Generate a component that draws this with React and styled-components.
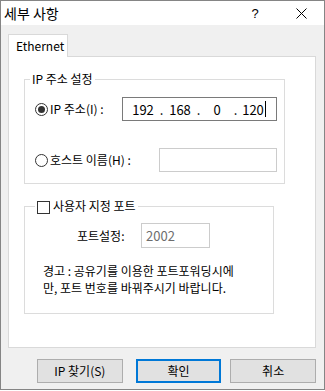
import styled, { createGlobalStyle } from "styled-components";

const GlobalStyle = createGlobalStyle`
  body {
    margin: 0;
    background: #ffffff;
    font-family: "Noto Sans CJK KR", "Noto Sans", sans-serif;
    font-size: 12px;
    color: #000;
  }
`;

export default () => {
  return (
    <>
      <GlobalStyle />
      <Window>
        <TitleBar>
          <Title>세부 사항</Title>
          <CaptionButton>?</CaptionButton>
          <CaptionButton>
            <svg width="11" height="11" viewBox="0 0 11 11">
              <path d="M0.5 0.5 L10.5 10.5 M10.5 0.5 L0.5 10.5" stroke="#000" strokeWidth="1" />
            </svg>
          </CaptionButton>
        </TitleBar>

        <Body>
          <TabStrip>
            <Tab>Ethernet</Tab>
          </TabStrip>
          <Panel>
            <Group $width={261}>
              <Legend $offset={5}>IP 주소 설정</Legend>
              <GroupInner $padding="10px 7px 11px 10px" $gap={27}>
                <OptionRow>
                  <Radio $checked />
                  <OptionLabel>IP 주소(I) :</OptionLabel>
                  <IpBox>
                    <IpField>192</IpField>
                    <IpDot>.</IpDot>
                    <IpField>168</IpField>
                    <IpDot>.</IpDot>
                    <IpField>0</IpField>
                    <IpDot>.</IpDot>
                    <IpField>
                      120<Caret />
                    </IpField>
                  </IpBox>
                </OptionRow>
                <OptionRow>
                  <Radio />
                  <OptionLabel>호스트 이름(H) :</OptionLabel>
                  <TextBox $width={118} />
                </OptionRow>
              </GroupInner>
            </Group>

            <Group $width={250} $top={14}>
              <Legend $offset={10}>
                <CheckLabel>
                  <Checkbox />
                  사용자 지정 포트
                </CheckLabel>
              </Legend>
              <GroupInner $padding="9px 7px 17px 0" $gap={14}>
                <PortRow>
                  <PortLabel>포트설정:</PortLabel>
                  <TextBox $width={69} $height={25}>2002</TextBox>
                </PortRow>
                <Warning>
                  경고 : 공유기를 이용한 포트포워딩시에
                  <br />
                  만, 포트 번호를 바꿔주시기 바랍니다.
                </Warning>
              </GroupInner>
            </Group>
          </Panel>

          <ButtonRow>
            <Button $space={13}>IP 찾기(S)</Button>
            <Button $space={9} $primary>
              확인
            </Button>
            <Button>취소</Button>
          </ButtonRow>
        </Body>
      </Window>
    </>
  );
};

const Window = styled.div`
  box-sizing: border-box;
  width: 325px;
  height: 390px;
  border: 1px solid #858585;
  background: #f0f0f0;
  display: flex;
  flex-direction: column;
`;

const TitleBar = styled.div`
  height: 24px;
  background: #ffffff;
  display: flex;
  align-items: center;
  padding-left: 3px;
`;

const Title = styled.div`
  flex: 1;
  font-size: 14px;
  line-height: 24px;
`;

const CaptionButton = styled.div`
  width: 46px;
  height: 24px;
  display: flex;
  align-items: center;
  justify-content: center;
  font-size: 13px;
  font-family: "Liberation Sans", sans-serif;
`;

const Body = styled.div`
  flex: 1;
  display: flex;
  flex-direction: column;
  padding: 9px 8px 6px 7px;
`;

const TabStrip = styled.div`
  display: flex;
  height: 22px;
`;

const Tab = styled.div`
  box-sizing: border-box;
  width: 60px;
  height: 23px;
  padding-left: 7px;
  border: 1px solid #d9d9d9;
  border-bottom: none;
  background: #ffffff;
  line-height: 21px;
  position: relative;
  z-index: 1;
`;

const Panel = styled.div`
  box-sizing: border-box;
  height: 292px;
  border: 1px solid #d9d9d9;
  background: #ffffff;
  padding: 14px 0 0 15px;
  display: flex;
  flex-direction: column;
  align-items: flex-start;
`;

const Group = styled.fieldset`
  box-sizing: border-box;
  width: ${(p) => p.$width}px;
  margin: ${(p) => p.$top || 0}px 0 0 0;
  padding: 0;
  min-width: 0;
  border: 1px solid #dcdcdc;
`;

const Legend = styled.legend`
  margin-left: ${(p) => p.$offset}px;
  padding: 0 2px;
  line-height: 16px;
  height: 16px;
`;

const GroupInner = styled.div`
  display: flex;
  flex-direction: column;
  gap: ${(p) => p.$gap}px;
  padding: ${(p) => p.$padding};
`;

const OptionRow = styled.div`
  display: flex;
  align-items: center;
  height: 24px;
`;

const Radio = styled.span`
  box-sizing: border-box;
  width: 13px;
  height: 13px;
  border-radius: 50%;
  border: 1px solid #333333;
  background: #ffffff;
  display: flex;
  align-items: center;
  justify-content: center;
  margin-right: 2px;

  &::after {
    content: "";
    width: 7px;
    height: 7px;
    border-radius: 50%;
    background: #333333;
    display: ${(p) => (p.$checked ? "block" : "none")};
  }
`;

const OptionLabel = styled.span`
  flex: 1;
  line-height: 16px;
`;

const IpBox = styled.div`
  box-sizing: border-box;
  width: 155px;
  height: 24px;
  border: 1px solid #7a7a7a;
  background: #ffffff;
  display: flex;
  align-items: center;
  padding-left: 6px;
  font-size: 13px;
`;

const IpField = styled.span`
  width: 28px;
  text-align: center;
  display: flex;
  align-items: center;
  justify-content: center;
`;

const IpDot = styled.span`
  width: 9px;
  text-align: center;
`;

const Caret = styled.span`
  width: 1px;
  height: 16px;
  background: #000;
  margin-left: 1px;
`;

const TextBox = styled.div`
  box-sizing: border-box;
  width: ${(p) => p.$width}px;
  height: ${(p) => p.$height || 24}px;
  border: 1px solid #cccccc;
  background: #ffffff;
  color: #6d6d6d;
  padding-left: 4px;
  font-size: 13px;
  display: flex;
  align-items: center;
`;

const CheckLabel = styled.span`
  display: flex;
  align-items: center;
  gap: 3px;
`;

const Checkbox = styled.span`
  box-sizing: border-box;
  width: 13px;
  height: 13px;
  border: 1px solid #333333;
  background: #ffffff;
  margin-top: 2px;
`;

const PortRow = styled.div`
  display: flex;
  align-items: center;
  padding-left: 52px;
`;

const PortLabel = styled.span`
  width: 64px;
  line-height: 16px;
`;

const Warning = styled.div`
  padding-left: 18px;
  line-height: 17px;
  white-space: nowrap;
`;

const ButtonRow = styled.div`
  display: flex;
  margin-top: 11px;
  padding-left: 29px;
`;

const Button = styled.div`
  box-sizing: border-box;
  width: 86px;
  height: 24px;
  margin-right: ${(p) => p.$space || 0}px;
  background: #e1e1e1;
  border: ${(p) => (p.$primary ? "2px solid #0078d7" : "1px solid #adadad")};
  display: flex;
  align-items: center;
  justify-content: center;
  line-height: 16px;
`;
